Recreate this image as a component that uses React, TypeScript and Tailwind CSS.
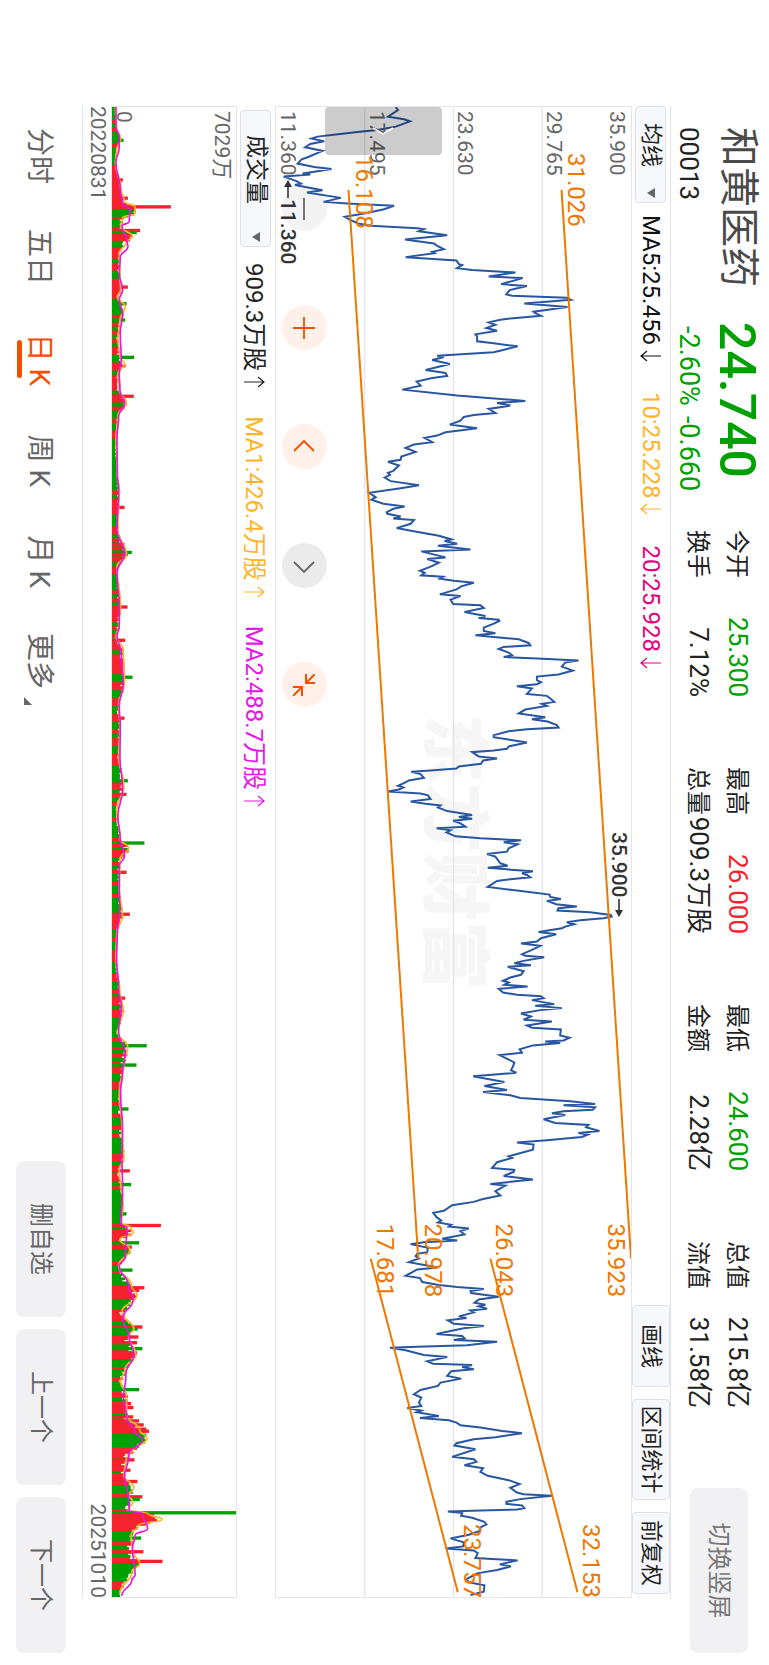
import { useState } from "react"
import type { ReactNode } from "react"

type Point = [number, number]
type Tone = "r" | "g"

const UP = "#f5222d"
const DOWN = "#00a000"

// Chart space: 4476 units of time across, price measured up from the bottom (0-1068)
const CHART_W = 4476
const PRICE_H = 1068
const VOLUME_H = 375

// Close line, stored in chunks: "time,price" pairs relative to the chunk origin
const PRICE_CHUNKS: { t: number; p: number; data: string }[] = [
  {
    t: -33,
    p: -15,
    data: "33,375 42,382 62,352 70,400 76,418 92,375 102,320 108,260 122,140 128,122 136,160 144,118 154,103 165,155 184,110 190,92 203,80 213,130 219,182 228,125 233,95 236,118 242,38 255,75 263,90 267,72 283,155 290,108 306,210 318,158 323,230 330,370 340,340 352,285 363,222 372,238 383,262 390,300 397,440 400,460 406,445 418,530 431,403 443,490 450,500 460,520 468,485 472,492 484,405 494,558 505,565 508,575 517,560 523,605 530,735 542,655 547,757 565,692 571,770 583,718 596,708 600,725 606,890 612,902 623,762 634,892 648,790 652,795 660,812 668,720 672,690 680,655 687,675 697,648 705,680 716,615 722,620 737,620 743,670 752,742 764,695 770,670 780,500 784,520 789,500",
  },
  {
    t: 747,
    p: 225,
    data: "13,245 25,298 43,225 52,285 61,290 67,245 78,198 90,210 102,155 120,320 136,525 142,440 150,480 160,415 172,435 178,370 184,340 195,330 207,298 218,380 230,285 240,260 247,222 260,245 267,190 277,165 289,195 303,152 313,150 319,112 330,145 346,128 352,112 358,118 366,102 377,120 389,205 398,150 412,55 425,75 433,62 445,98 453,162 460,128 470,108 475,110 483,150 489,128 494,190 505,180 518,138 527,185 541,265 552,303 557,282 565,320 571,262 582,360 588,212 606,285 611,230 622,265 633,242 646,208 652,222 660,212 664,278 670,268 676,310 682,370 693,332 702,318 717,268 722,330 733,300 746,308 750,390 758,400 770,342 782,405 788,385 793,445",
  },
  {
    t: 1527,
    p: 225,
    data: "17,447 25,430 37,400 47,400 54,435 60,375 65,430 72,505 83,535 90,540 95,460 101,445 112,475 120,485 125,460 130,560 136,685 142,645 154,635 166,668 178,625 184,560 195,560 201,572 207,560 213,500 220,545 236,530 242,590 250,600 260,612 266,575 272,590 283,525 295,505 306,585 312,545 319,592 330,620 337,625 342,530 348,475 360,430 366,430 382,530 394,475 401,470 406,430 411,365 424,385 430,440 436,398 446,392 454,325 460,318 466,240 470,182 477,210 488,220 496,175 505,158 512,142 517,158 523,145 529,112 535,210 541,232 552,240 559,180 566,225 571,270 577,262 588,290 600,365 606,325 611,365 617,308 625,330 635,345 640,258 646,300 652,288 664,315 670,390 676,512 682,460 688,502 700,475 710,470 717,410 725,435 745,450 752,472 758,412 764,480 769,548 775,515",
  },
  {
    t: 2307,
    p: 225,
    data: "0,530 7,540 13,480 18,440 36,412 47,500 59,598 66,600 72,632 78,590 88,618 95,680 100,625 107,622 112,720 120,782 125,785 130,760 136,690 142,650 148,672 155,645 160,635 171,565 178,618 190,572 200,560 206,512 213,570 225,545 238,515 243,525 247,582 258,520 265,492 271,542 276,472 289,520 300,512 308,480 318,458 323,475 330,462 335,532 342,445 353,458 360,500 364,572 370,580 376,545 388,612 393,555 400,635 406,570 416,512 425,542 435,520 440,605 452,530 459,545 464,632 482,630 489,658 497,640 500,585 505,630 512,548 524,508 534,515 541,448 553,472 563,492 575,488 587,482 594,498 600,425 605,368 613,412 622,462 634,402 646,470 652,398 662,480 670,510 680,660 688,735 692,640 698,735 705,728 710,640 716,605 721,645 734,580 745,615 751,715 758,708 769,748 775,685",
  },
  {
    t: 3087,
    p: 225,
    data: "0,713 7,695 17,590 24,500 30,550 45,548 58,500 65,475 70,485 83,440 100,425 106,492 112,490 124,460 135,548 148,420 153,465 170,435 183,450 189,420 194,395 202,370 212,305 229,280 235,248 248,258 258,272 264,262 271,302 276,295 282,355 290,330 300,342 313,275 318,320 323,220 329,180 340,232 353,230 358,200 365,195 372,205 383,175 399,262 405,200 424,165 431,208 443,215 452,265 458,320 464,400 470,360 476,362 487,445 495,385 505,372 511,405 516,385 523,410 528,360 534,370 546,325 551,348 558,292 568,310 575,400 582,340 590,300 599,258 605,335 612,342 617,310 622,440 633,350 637,200 640,118 648,165 662,220 668,290 681,230 688,248 692,365 698,335",
  },
  {
    t: 3792,
    p: 225,
    data: "0,370 6,302 20,290 28,332 40,270 50,262 62,210 75,190 85,212 100,205 110,212 116,170 124,212 129,198 140,265 146,208 153,295 160,318 168,330 175,390 185,455 192,515 204,435 210,370 222,318 229,312 240,375 263,305 270,370 278,378 288,342 297,398 308,390 320,412 333,475 345,508 356,480 370,500 375,520 380,605 390,510 398,468 404,468 409,515 417,522 421,500 424,390 427,292 432,335 440,332 446,365 458,402 466,408 475,390 485,390 497,355 508,300 520,340 532,338 538,285 544,370 552,382 567,375 574,502 586,448 592,482 603,440 613,380 630,348 640,355 649,402 668,400 678,360",
  },
]

const pricePoints = PRICE_CHUNKS.flatMap((c) =>
  c.data.split(" ").map((pair) => {
    const [t, p] = pair.split(",").map(Number)
    return `${t + c.t},${PRICE_H - (p + c.p)}`
  }),
).join(" ")

const CHANNELS: [Point, Point][] = [
  [[249, 218], [3460, 428]],
  [[249, 859], [3459, 1068]],
  [[3460, 285], [4462, 547]],
  [[3460, 645], [4462, 907]],
]

// Drawn price tags: text, time, price of the baseline
const TAGS: [string, number, number][] = [
  ["16.108", 144, 240],
  ["31.026", 138, 878],
  ["17.681", 3354, 305],
  ["20.978", 3354, 447],
  ["26.043", 3354, 663],
  ["35.923", 3354, 999],
  ["23.757", 4257, 567],
  ["32.153", 4257, 925],
]

const PRICE_AXIS = ["29.765", "23.630", "17.495", "11.360"]

const MA_SLOW: Point[] = [
  [0, 12], [60, 12], [90, 22], [120, 22], [167, 12], [247, 25], [290, 32], [310, 55], [345, 52], [357, 30], [400, 45],
  [420, 48], [450, 25], [500, 22], [550, 32], [580, 22], [620, 32], [680, 25], [760, 28], [800, 22], [850, 24],
  [890, 38], [930, 20], [1000, 15], [1100, 16], [1152, 20], [1270, 15], [1340, 38], [1400, 15], [1500, 22],
  [1560, 22], [1590, 15], [1640, 28], [1730, 34], [1800, 22], [1860, 25], [1950, 24], [2050, 32], [2130, 18],
  [2200, 25], [2250, 38], [2280, 22], [2352, 22], [2420, 24], [2480, 16], [2560, 14], [2650, 20], [2700, 28],
  [2780, 20], [2840, 40], [2900, 32], [2960, 26], [3072, 32], [3162, 30], [3244, 32], [3355, 28], [3367, 45],
  [3455, 40], [3482, 22], [3541, 50], [3582, 64], [3640, 32], [3695, 52], [3746, 66], [3808, 42], [3880, 35],
  [3940, 45], [3981, 70], [4004, 92], [4045, 52], [4118, 38], [4176, 50], [4216, 52], [4226, 92], [4271, 108],
  [4290, 70], [4330, 62], [4410, 70], [4425, 60], [4472, 30],
]

const MA_FAST: Point[] = [
  [0, 10], [60, 14], [95, 26], [130, 14], [167, 10], [247, 28], [285, 38], [300, 70], [320, 70], [332, 32],
  [358, 26], [390, 62], [405, 44], [440, 22], [500, 24], [550, 26], [570, 16], [600, 40], [640, 24], [700, 18],
  [750, 24], [772, 38], [800, 18], [850, 22], [890, 44], [925, 18], [1000, 12], [1100, 16], [1152, 22],
  [1270, 18], [1345, 44], [1380, 15], [1500, 26], [1560, 20], [1590, 12], [1630, 34], [1725, 38], [1800, 20],
  [1860, 24], [1950, 20], [2040, 36], [2110, 14], [2200, 24], [2225, 50], [2260, 24], [2352, 22], [2430, 32],
  [2480, 14], [2560, 12], [2660, 24], [2710, 34], [2780, 18], [2825, 48], [2870, 36], [2960, 22], [3072, 30],
  [3160, 36], [3190, 22], [3300, 34], [3350, 28], [3368, 58], [3380, 64], [3402, 24], [3432, 54], [3480, 20],
  [3545, 60], [3568, 76], [3620, 30], [3672, 66], [3690, 50], [3750, 72], [3790, 40], [3830, 26], [3870, 44],
  [3930, 44], [3975, 84], [4000, 106], [4040, 60], [4056, 44], [4110, 36], [4148, 66], [4170, 50], [4190, 64],
  [4214, 48], [4226, 110], [4243, 152], [4260, 80], [4290, 58], [4340, 62], [4375, 84], [4400, 60], [4465, 24],
]

// Days that stand out of the average volume
const SPIKES: [number, number, Tone][] = [
  [100, 35, "g"], [219, 33, "r"], [274, 48, "r"], [300, 178, "r"], [312, 62, "g"], [321, 48, "g"], [371, 85, "r"],
  [377, 75, "g"], [385, 60, "r"], [541, 48, "r"], [591, 44, "g"], [640, 40, "g"], [752, 67, "g"], [869, 66, "r"],
  [1203, 38, "r"], [1314, 38, "r"], [1338, 60, "g"], [1344, 48, "r"], [1502, 47, "r"], [1602, 40, "r"],
  [1713, 62, "g"], [1836, 38, "r"], [2024, 48, "g"], [2065, 44, "r"], [2211, 98, "g"], [2218, 48, "r"],
  [2299, 44, "r"], [2425, 54, "r"], [2677, 40, "r"], [2820, 105, "g"], [2878, 74, "g"], [3010, 50, "g"],
  [3196, 54, "r"], [3237, 58, "g"], [3325, 44, "g"], [3360, 148, "r"], [3412, 82, "g"], [3425, 60, "r"],
  [3494, 62, "g"], [3547, 98, "r"], [3555, 82, "r"], [3665, 92, "r"], [3671, 78, "g"], [3695, 80, "r"],
  [3712, 76, "r"], [3730, 92, "g"], [3743, 76, "r"], [3853, 82, "g"], [3895, 58, "r"], [3907, 65, "r"],
  [3935, 64, "r"], [3947, 82, "r"], [3959, 96, "r"], [3978, 112, "r"], [3972, 104, "r"], [3990, 104, "g"],
  [4064, 68, "r"], [4095, 56, "r"], [4129, 77, "r"], [4175, 92, "r"], [4183, 84, "g"], [4223, 375, "g"],
  [4229, 126, "r"], [4235, 118, "r"], [4241, 108, "r"], [4299, 88, "g"], [4340, 95, "r"], [4369, 153, "r"],
]

// Stretches where a single direction dominates
const RUNS: [number, number, Tone][] = [
  [150, 160, "g"], [170, 300, "r"], [306, 325, "g"], [382, 400, "r"], [870, 885, "r"], [1350, 1362, "r"],
  [3105, 3130, "g"], [3250, 3318, "g"], [3540, 3578, "r"], [3579, 3600, "g"], [3736, 3760, "r"], [3762, 3780, "g"],
  [3945, 3987, "r"], [3988, 4024, "g"], [4025, 4036, "r"], [4104, 4136, "r"], [4137, 4150, "g"], [4229, 4260, "r"],
  [4275, 4304, "g"], [4380, 4424, "g"],
]

function interpolate(line: Point[], t: number) {
  const next = line.findIndex(([x]) => x > t)
  if (next <= 0) return line[next === 0 ? 0 : line.length - 1][1]
  const [x0, y0] = line[next - 1]
  const [x1, y1] = line[next]
  return y0 + ((y1 - y0) * (t - x0)) / (x1 - x0)
}

function noise(n: number) {
  const s = Math.sin(n * 127.1 + 11.7) * 43758.5453
  return s - Math.floor(s)
}

const volumeBars = Array.from({ length: 746 }, (_, i) => {
  const t = i * 6
  const run = RUNS.find(([from, to]) => t >= from && t <= to)
  const tone: Tone = run ? run[2] : noise(Math.floor(i / 2)) > 0.46 ? "g" : "r"
  const h = interpolate(MA_FAST, t) * (run ? 0.85 + noise(i) * 0.2 : 0.68 + noise(i) * 0.45)
  return { t, h, tone }
})

function smoothPath(line: Point[]) {
  const pts = line.map(([x, y]) => [x, VOLUME_H - y])
  let d = `M${pts[0][0]},${pts[0][1]}`
  for (let i = 1; i < pts.length; i++) {
    const mid = (pts[i - 1][0] + pts[i][0]) / 2
    d += `C${mid},${pts[i - 1][1]} ${mid},${pts[i][1]} ${pts[i][0]},${pts[i][1]}`
  }
  return d
}

function Trend({ up = false }: { up?: boolean }) {
  return (
    <svg viewBox="0 0 12 22" className={up ? "h-[22px] w-3" : "h-[22px] w-3 rotate-180"} fill="none" stroke="currentColor" strokeWidth="1.2">
      <path d="M6 21V1M1 7L6 1L11 7" />
    </svg>
  )
}

function Indicator({ className, up, children }: { className: string; up?: boolean; children: ReactNode }) {
  return (
    <span className={`flex items-center gap-[5px] ${className}`}>
      {children}
      <Trend up={up} />
    </span>
  )
}

function Caret() {
  return (
    <svg viewBox="0 0 10 8" className="h-2 w-2.5" fill="#666">
      <path d="M0 0H10L5 8Z" />
    </svg>
  )
}

const STATS: { label: string; value: string; tone?: string }[] = [
  { label: "今开", value: "25.300", tone: "text-[#00a000]" },
  { label: "最高", value: "26.000", tone: "text-[#f5222d]" },
  { label: "最低", value: "24.600", tone: "text-[#00a000]" },
  { label: "总值", value: "215.8亿" },
  { label: "换手", value: "7.12%" },
  { label: "总量", value: "909.3万股" },
  { label: "金额", value: "2.28亿" },
  { label: "流值", value: "31.58亿" },
]

function Header() {
  return (
    <header className="flex h-[98px] shrink-0 items-start pr-3 pl-[127px]">
      <div className="w-[195px] shrink-0">
        <h1 className="mt-2 h-[48px] text-[40px] leading-[46px] text-[#4a4a4a]">和黄医药</h1>
        <p className="mt-2 text-[26px] leading-8">00013</p>
      </div>
      <div className="w-[208px] shrink-0 text-[#00a000]">
        <p className="mt-2 h-[48px] text-[50px] leading-[48px] font-medium">24.740</p>
        <p className="mt-2 flex gap-2.5 pl-1 text-[27px] leading-8">
          <span>-2.60%</span>
          <span>-0.660</span>
        </p>
      </div>
      <dl className="mt-3 grid grid-cols-[repeat(4,167px)] gap-x-[70px]">
        {STATS.map((s) => (
          <div key={s.label} className="flex h-[39px] items-center justify-between whitespace-nowrap">
            <dt className="text-2xl">{s.label}</dt>
            <dd className={`text-[26px] ${s.tone ?? ""}`}>{s.value}</dd>
          </div>
        ))}
      </dl>
      <button className="mt-[21px] ml-auto h-[58px] w-[165px] shrink-0 rounded-lg bg-[#f1f1f4] text-2xl text-[#777]">
        切换竖屏
      </button>
    </header>
  )
}

function AverageBar() {
  return (
    <div className="flex h-[39px] items-center border-t border-[#e3e3e6] text-2xl">
      <button className="flex h-[31px] w-[97px] items-center justify-between rounded border border-[#dfe1e8] bg-[#f6f8fb] pr-1 pl-4 text-[22px]">
        均线
        <Caret />
      </button>
      <div className="ml-3 flex gap-[30px]">
        <Indicator className="text-[#111]">MA5:25.456</Indicator>
        <Indicator className="text-[#ffb428]">10:25.228</Indicator>
        <Indicator className="text-[#e6007e]">20:25.928</Indicator>
      </div>
      <div className="mr-1 ml-auto flex h-full gap-3 text-[22px]">
        <button className="w-[82px] rounded border border-[#dfe1e8] bg-[#f6f8fb]">画线</button>
        <button className="w-[101px] rounded border border-[#dfe1e8] bg-[#f6f8fb]">区间统计</button>
        <button className="w-[82px] rounded border border-[#dfe1e8] bg-[#f6f8fb]">前复权</button>
      </div>
    </div>
  )
}

function ChartControls() {
  const warm = "flex size-[45px] items-center justify-center rounded-full bg-[#fff1ea] text-[#f15000]"
  const icon = "size-[22px]"
  return (
    <div className="absolute bottom-1.5 left-[79px] flex gap-[74px]">
      <button aria-label="缩小" className="flex size-[45px] items-center justify-center rounded-full bg-[#f3f3f3] text-[#666]">
        <svg viewBox="0 0 22 22" className={icon} stroke="currentColor" strokeWidth="1.8">
          <path d="M0 11H22" />
        </svg>
      </button>
      <button aria-label="放大" className={warm}>
        <svg viewBox="0 0 22 22" className={icon} stroke="currentColor" strokeWidth="1.8">
          <path d="M0 11H22M11 0V22" />
        </svg>
      </button>
      <button aria-label="向前" className={warm}>
        <svg viewBox="0 0 22 22" className={icon} fill="none" stroke="currentColor" strokeWidth="1.8">
          <path d="M15 1L5 11L15 21" />
        </svg>
      </button>
      <button aria-label="向后" className="flex size-[45px] items-center justify-center rounded-full bg-[#ebebeb] text-[#666]">
        <svg viewBox="0 0 22 22" className={icon} fill="none" stroke="currentColor" strokeWidth="1.8">
          <path d="M7 1L17 11L7 21" />
        </svg>
      </button>
      <button aria-label="收起" className={warm}>
        <svg viewBox="0 0 22 22" className={icon} fill="none" stroke="currentColor" strokeWidth="2">
          <path d="M0 0L9 9M9 0V9H0M22 22L13 13M22 13H13V22" />
        </svg>
      </button>
    </div>
  )
}

function PriceChart() {
  return (
    <div className="relative h-[357px] border border-[#e3e5ec]">
      <div className="absolute inset-0 flex items-center justify-center text-[69px] font-black text-[#f6f6f6]">
        东方财富
      </div>
      <ChartControls />
      <svg viewBox={`0 0 ${CHART_W} ${PRICE_H}`} preserveAspectRatio="none" className="pointer-events-none absolute inset-0 h-full w-full" fill="none">
        {[267, 534, 801].map((y) => (
          <path key={y} d={`M0 ${y}H${CHART_W}`} stroke="#e3e5ec" strokeWidth="4" />
        ))}
        <polyline points={pricePoints} stroke="#2856a0" strokeWidth="6" />
      </svg>
      <div className="pointer-events-none absolute inset-0 grid grid-rows-4 pl-1 text-[21px] leading-6 text-[#666]">
        {PRICE_AXIS.map((label, i) => (
          <div key={label} className="flex flex-col justify-between pt-0.5">
            <span>{i === 0 ? "35.900" : ""}</span>
            <span>{label}</span>
          </div>
        ))}
      </div>
      <button aria-label="展开" className="absolute top-[189px] left-0 flex h-[117px] w-12 items-center justify-center rounded-sm bg-black/20">
        <svg viewBox="0 0 8 22" className="h-[22px] w-2" fill="none" stroke="#fff" strokeWidth="1.5">
          <path d="M1 1L7 11L1 21" />
        </svg>
      </button>
      <svg viewBox={`0 0 ${CHART_W} ${PRICE_H}`} preserveAspectRatio="none" className="pointer-events-none absolute inset-0 h-full w-full" stroke="#ee7800" strokeWidth="6">
        {CHANNELS.map(([a, b]) => (
          <line key={`${a}`} x1={a[0]} y1={PRICE_H - a[1]} x2={b[0]} y2={PRICE_H - b[1]} />
        ))}
      </svg>
      {TAGS.map(([text, t, p]) => (
        <span
          key={text}
          className="absolute -mb-1.5 text-2xl leading-7 text-[#ee7800]"
          style={{ left: `${(t / CHART_W) * 100}%`, bottom: `${(p / PRICE_H) * 100}%` }}
        >
          {text}
        </span>
      ))}
      <span className="absolute bottom-0 left-[73px] flex items-center gap-px text-[21px] leading-6 font-medium text-[#333]">
        <svg viewBox="0 0 18 10" className="h-2.5 w-[18px]" fill="#333">
          <path d="M0 5L7 1V4.2H18V5.8H7V9Z" />
        </svg>
        11.360
      </span>
      <span className="absolute top-0 left-[725px] flex items-center gap-px text-[21px] leading-6 font-medium text-[#333]">
        35.900
        <svg viewBox="0 0 18 10" className="h-2.5 w-[18px]" fill="#333">
          <path d="M18 5L11 1V4.2H0V5.8H11V9Z" />
        </svg>
      </span>
    </div>
  )
}

function VolumeBar() {
  return (
    <div className="flex h-[38px] items-center pl-1 text-2xl">
      <button className="flex h-[31px] w-[137px] items-center justify-between rounded border border-[#dfe1e8] bg-[#f6f8fb] pr-1 pl-6 text-[23px]">
        成交量
        <Caret />
      </button>
      <div className="mt-1 ml-4 flex gap-7">
        <Indicator up className="text-[#222]">909.3万股</Indicator>
        <Indicator up className="text-[#ffb428]">MA1:426.4万股</Indicator>
        <Indicator up className="text-[#e815e8]">MA2:488.7万股</Indicator>
      </div>
    </div>
  )
}

function VolumeChart() {
  return (
    <div className="relative h-[126px] border border-[#e3e3e6]">
      <div className="absolute inset-0 flex flex-col justify-between pl-1 leading-6 text-[#666]">
        <span className="text-[21px] leading-7">7029万</span>
        <span className="text-[21px]">0</span>
      </div>
      <svg viewBox={`0 0 ${CHART_W} ${VOLUME_H}`} preserveAspectRatio="none" className="absolute inset-0 h-full w-full">
        {volumeBars.map(({ t, h, tone }) => (
          <rect key={t} x={t} y={VOLUME_H - h} width="8" height={h} fill={tone === "r" ? UP : DOWN} />
        ))}
        {SPIKES.map(([t, h, tone]) => (
          <rect key={t} x={t - 5} y={VOLUME_H - h} width="10" height={h} fill={tone === "r" ? UP : DOWN} />
        ))}
        <path d={smoothPath(MA_FAST)} fill="none" stroke="#ffb428" strokeWidth="5" />
        <path d={smoothPath(MA_SLOW)} fill="none" stroke="#e815e8" strokeWidth="5" />
      </svg>
    </div>
  )
}

const PERIODS = ["分时", "五日", "日 K", "周 K", "月 K", "更多"]

function Footer() {
  const [period, setPeriod] = useState("日 K")

  return (
    <footer className="flex flex-1 items-center pr-3 pl-[126px]">
      <nav className="flex gap-[43px] pt-1 text-[28px] text-[#666]">
        {PERIODS.map((name) => (
          <button
            key={name}
            onClick={() => setPeriod(name)}
            className={`relative w-[58px] text-right whitespace-nowrap ${name === period ? "text-[#f15000]" : ""}`}
          >
            {name}
            {name === period && <span className="absolute right-2 -bottom-px left-3 h-[5px] rounded-full bg-[#f15000]" />}
            {name === "更多" && (
              <svg viewBox="0 0 8 8" className="absolute -right-4 bottom-1.5 size-2" fill="#666">
                <path d="M8 0V8H0Z" />
              </svg>
            )}
          </button>
        ))}
      </nav>
      <div className="ml-auto flex gap-3 text-2xl text-[#666]">
        {["删自选", "上一个", "下一个"].map((label) => (
          <button key={label} className="h-[50px] w-[156px] rounded-lg bg-[#f1f1f4]">
            {label}
          </button>
        ))}
      </div>
    </footer>
  )
}

export default function App() {
  return (
    <div className="relative h-dvh w-full overflow-hidden bg-white">
      {/* Landscape screen, turned a quarter clockwise inside the portrait window */}
      <main className="absolute top-0 left-full flex h-[100dvw] w-[100dvh] origin-top-left rotate-90 flex-col font-[Roboto,'Noto_Sans_CJK_SC',sans-serif] text-[#222]">
        <Header />
        <section className="mr-[67px] ml-[106px]">
          <AverageBar />
          <PriceChart />
          <VolumeBar />
          <VolumeChart />
          <div className="flex h-[29px] items-center justify-between border-b border-[#e3e3e6] text-[21px] text-[#666]">
            <time>20220831</time>
            <time>20251010</time>
          </div>
        </section>
        <Footer />
      </main>
    </div>
  )
}
